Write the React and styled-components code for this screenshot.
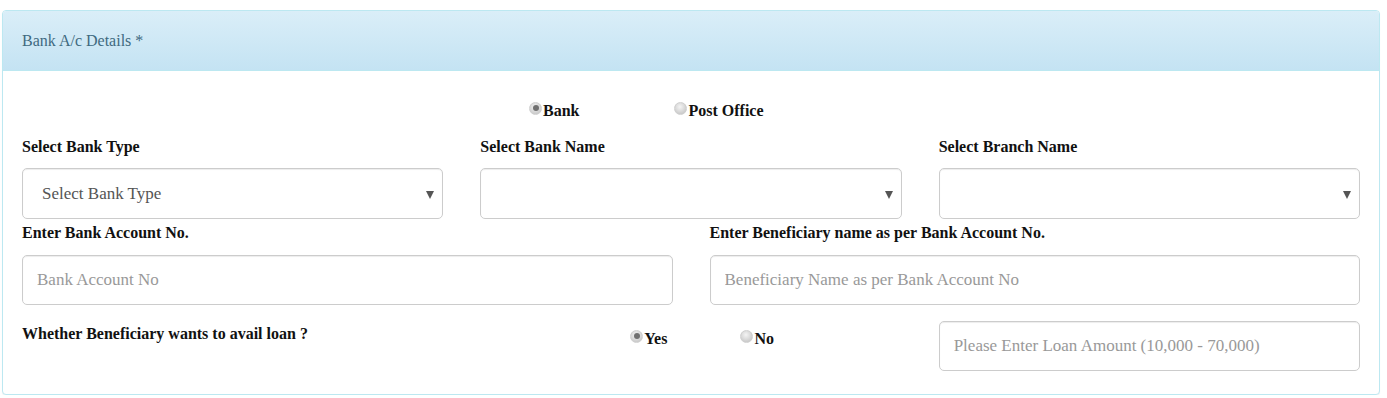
import React, { useState } from 'react'
import styled, { createGlobalStyle } from 'styled-components'

const GlobalStyle = createGlobalStyle`
    html, body {
        margin: 0;
        padding: 0;
        background: #fff;
    }
    body {
        font-family: "Liberation Serif", "Times New Roman", serif;
        color: #222;
    }
`

const Page = styled.div`
    padding: 10px 7px 0 2px;
`

const Panel = styled.div`
    border: 1px solid #bce8f1;
    border-radius: 4px;
    background: #fff;
    box-shadow: 0 1px 1px rgba(0, 0, 0, 0.05);
    overflow: hidden;
`

const PanelHeading = styled.div`
    height: 59px;
    display: flex;
    align-items: center;
    padding: 0 19px;
    background: linear-gradient(180deg, #daeef8 0%, #c4e3f3 100%);
    border-bottom: 1px solid #bce8f1;
    color: #3f6a80;
    font-size: 16px;
`

const PanelBody = styled.div`
    padding: 30px 19px 23px;
`

const RadioRow = styled.div`
    display: flex;
    align-items: center;
    height: 20px;
    gap: ${props => props.gap || 96}px;
    padding-left: ${props => props.offset || 0}px;
    margin-top: ${props => props.top || 0}px;
`

const RadioLabel = styled.label`
    display: flex;
    align-items: center;
    font-size: 16px;
    font-weight: bold;
    color: #111;
    cursor: pointer;
`

const RadioDot = styled.span`
    width: 13px;
    height: 13px;
    border-radius: 50%;
    margin-right: 1px;
    margin-top: -6px;
    box-sizing: border-box;
    border: 1px solid #cfcfcf;
    background: radial-gradient(circle at 45% 35%, #f4f4f4 0%, #d6d6d6 55%, #bdbdbd 100%);
    display: flex;
    align-items: center;
    justify-content: center;
    &::after {
        content: '';
        width: 6px;
        height: 6px;
        border-radius: 50%;
        background: ${props => props.checked ? '#707070' : 'transparent'};
    }
`

const Grid = styled.div`
    display: grid;
    grid-template-columns: repeat(${props => props.cols}, 1fr);
    column-gap: 37px;
    margin-top: ${props => props.top || 0}px;
`

const Field = styled.div`
    display: flex;
    flex-direction: column;
`

const Label = styled.div`
    font-size: 16px;
    font-weight: bold;
    color: #111;
    line-height: 20px;
    height: 20px;
    margin-bottom: ${props => props.gap || 11}px;
    white-space: nowrap;
`

const SelectBox = styled.div`
    position: relative;
    height: 51px;
    box-sizing: border-box;
    border: 1px solid #ccc;
    border-radius: 5px;
    box-shadow: inset 0 1px 1px rgba(0, 0, 0, 0.075);
    display: flex;
    align-items: center;
    padding: 0 19px;
    font-size: 17px;
    color: #555;
    &::after {
        content: '';
        position: absolute;
        right: 8px;
        top: 22px;
        border-left: 4px solid transparent;
        border-right: 4px solid transparent;
        border-top: 8px solid #555;
    }
`

const TextInput = styled.input`
    height: ${props => props.h || 50}px;
    box-sizing: border-box;
    border: 1px solid #ccc;
    border-radius: 5px;
    box-shadow: inset 0 1px 1px rgba(0, 0, 0, 0.075);
    padding: 0 14px;
    font-family: "Liberation Serif", "Times New Roman", serif;
    font-size: 17px;
    color: #555;
    outline: none;
    &::placeholder {
        color: #999;
    }
`

const LoanRow = styled(Grid)`
    align-items: start;
`

const LoanLabel = styled.div`
    font-size: 16px;
    font-weight: bold;
    color: #111;
    line-height: 20px;
    margin-top: 3px;
    white-space: nowrap;
`

const LoanRadios = styled(RadioRow)`
    margin-top: 8px;
`

const Radio = ({ checked, onClick, children }) => (
    <RadioLabel onClick={onClick}>
        <RadioDot checked={checked} />
        {children}
    </RadioLabel>
)

const App = () => {
    const [ mode, setMode ] = useState('bank')
    const [ loan, setLoan ] = useState('yes')
    return (
        <Page>
            <GlobalStyle />
            <Panel>
                <PanelHeading>Bank A/c Details *</PanelHeading>
                <PanelBody>
                    <RadioRow offset={507} gap={95}>
                        <Radio checked={mode === 'bank'} onClick={() => setMode('bank')}>Bank</Radio>
                        <Radio checked={mode === 'post'} onClick={() => setMode('post')}>Post Office</Radio>
                    </RadioRow>
                    <Grid cols={3} top={16}>
                        <Field>
                            <Label>Select Bank Type</Label>
                            <SelectBox>Select Bank Type</SelectBox>
                        </Field>
                        <Field>
                            <Label>Select Bank Name</Label>
                            <SelectBox />
                        </Field>
                        <Field>
                            <Label>Select Branch Name</Label>
                            <SelectBox />
                        </Field>
                    </Grid>
                    <Grid cols={2} top={4}>
                        <Field>
                            <Label gap={12}>Enter Bank Account No.</Label>
                            <TextInput placeholder="Bank Account No" />
                        </Field>
                        <Field>
                            <Label gap={12}>Enter Beneficiary name as per Bank Account No.</Label>
                            <TextInput placeholder="Beneficiary Name as per Bank Account No" />
                        </Field>
                    </Grid>
                    <LoanRow cols={3} top={16}>
                        <LoanLabel>Whether Beneficiary wants to avail loan ?</LoanLabel>
                        <LoanRadios offset={150} gap={73}>
                            <Radio checked={loan === 'yes'} onClick={() => setLoan('yes')}>Yes</Radio>
                            <Radio checked={loan === 'no'} onClick={() => setLoan('no')}>No</Radio>
                        </LoanRadios>
                        <TextInput placeholder="Please Enter Loan Amount (10,000 - 70,000)" />
                    </LoanRow>
                </PanelBody>
            </Panel>
        </Page>
    )
}

export default App
